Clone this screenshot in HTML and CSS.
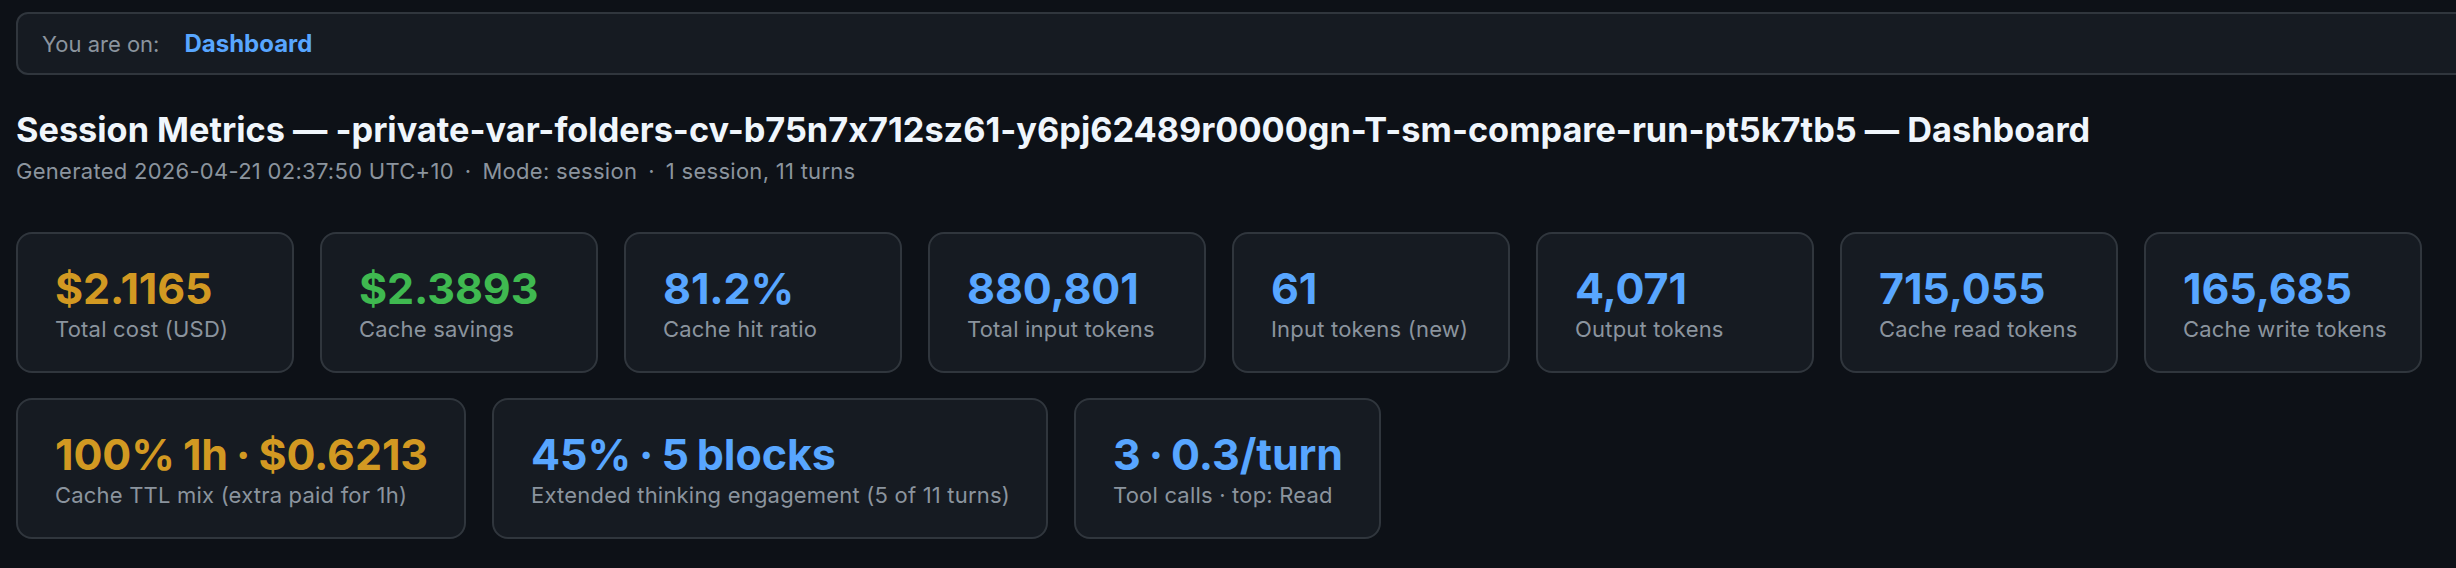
FILE: index.html
```html
<!DOCTYPE html>
<html lang="en">
<head>
<meta charset="utf-8">
<title>Session Metrics — Dashboard</title>
<link rel="stylesheet" href="styles.css">
</head>
<body>
<nav class="crumbs">
  <span class="crumb-label">You are on:</span>
  <a class="crumb-current" href="#">Dashboard</a>
</nav>
<header class="head">
  <h1 class="title">Session Metrics — -private-var-folders-cv-b75n7x712sz61-y6pj62489r0000gn-T-sm-compare-run-pt5k7tb5 — Dashboard</h1>
  <p class="meta">Generated 2026-04-21 02:37:50 UTC+10<span class="sep">·</span>Mode: session<span class="sep">·</span>1 session, 11 turns</p>
</header>
<section class="grid">
  <div class="card"><div class="value orange">$2.1165</div><div class="label">Total cost (USD)</div></div>
  <div class="card"><div class="value green">$2.3893</div><div class="label">Cache savings</div></div>
  <div class="card"><div class="value blue">81.2%</div><div class="label">Cache hit ratio</div></div>
  <div class="card"><div class="value blue">880,801</div><div class="label">Total input tokens</div></div>
  <div class="card"><div class="value blue">61</div><div class="label">Input tokens (new)</div></div>
  <div class="card"><div class="value blue">4,071</div><div class="label">Output tokens</div></div>
  <div class="card"><div class="value blue">715,055</div><div class="label">Cache read tokens</div></div>
  <div class="card"><div class="value blue">165,685</div><div class="label">Cache write tokens</div></div>
</section>
<section class="row">
  <div class="card"><div class="value orange">100% 1h · $0.6213</div><div class="label">Cache TTL mix (extra paid for 1h)</div></div>
  <div class="card"><div class="value blue">45% · 5 blocks</div><div class="label">Extended thinking engagement (5 of 11 turns)</div></div>
  <div class="card"><div class="value blue">3 · 0.3/turn</div><div class="label">Tool calls · top: Read</div></div>
</section>
</body>
</html>
```
FILE: styles.css
```css
html, body {
  overflow: hidden;
}
body {
  margin: 0;
  padding: 12px 16px;
  background: #0d1117;
  color: #e6edf3;
  font-family: Inter, "Noto Sans", "Liberation Sans", sans-serif;
  font-feature-settings: "calt" 0;
}
.crumbs {
  display: flex;
  align-items: center;
  gap: 25px;
  height: 59px;
  padding: 0 24px;
  margin-right: -80px;
  background: #161b22;
  border: 2px solid #30363d;
  border-radius: 12px;
  font-size: 22px;
}
.crumb-label {
  color: #8b949e;
}
.crumb-current {
  color: #58a6ff;
  font-size: 24px;
  font-weight: 700;
  text-decoration: none;
}
.head {
  margin-top: 34px;
}
.title {
  margin: 0;
  font-size: 34.3px;
  line-height: 41px;
  font-weight: 700;
  color: #f0f6fc;
}
.meta {
  margin: 7px 0 0;
  font-size: 22px;
  line-height: 29px;
  letter-spacing: 0.28px;
  color: #8b949e;
}
.sep {
  margin: 0 11px;
}
.grid {
  margin-top: 46px;
  display: grid;
  grid-template-columns: repeat(8, 278px);
  gap: 26px;
}
.row {
  margin-top: 25px;
  display: flex;
  gap: 26px;
}
.card {
  box-sizing: border-box;
  height: 141px;
  padding: 28px 36px 0 37px;
  background: #161b22;
  border: 2px solid #30363d;
  border-radius: 16px;
}
.value {
  font-size: 43px;
  line-height: 52px;
  font-weight: 700;
  letter-spacing: -0.1px;
  word-spacing: -2px;
  white-space: nowrap;
}
.label {
  margin-top: 1px;
  font-size: 22px;
  line-height: 29px;
  letter-spacing: 0.2px;
  color: #8b949e;
  white-space: nowrap;
}
.orange { color: #d29922; }
.green { color: #3fb950; }
.blue { color: #58a6ff; }
```
